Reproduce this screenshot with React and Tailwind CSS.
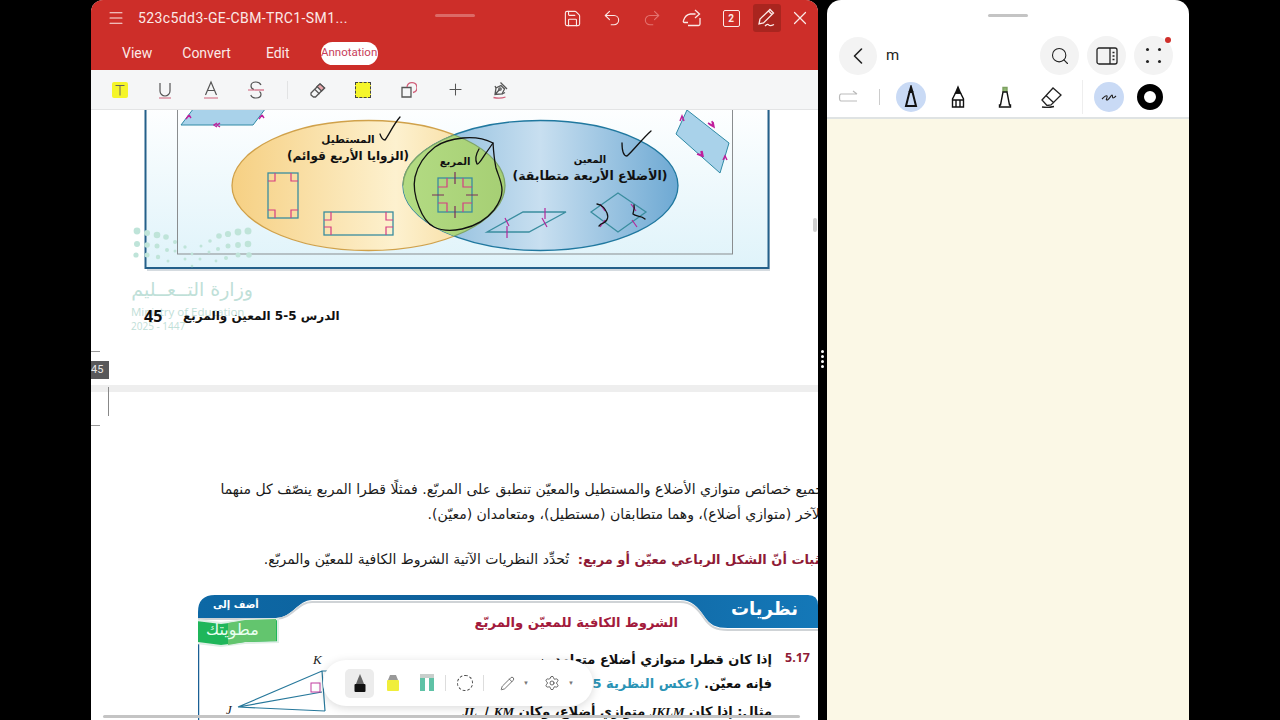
import React from "react";
import { Menu, Save, Undo2, Redo2, X, Plus, ChevronLeft, Search, Settings, Pencil } from "lucide-react";

const ar = "font-['DejaVu_Sans',sans-serif]";

function Underline() {
  return (
    <svg width="20" height="20" viewBox="0 0 20 20" fill="none" stroke="#555" strokeWidth="1.2">
      <path d="M5 3v8a5 5 0 0 0 10 0V3" />
      <path d="M4 18h12" stroke="#d0607a" />
    </svg>
  );
}

function LetterA() {
  return (
    <svg width="20" height="20" viewBox="0 0 20 20" fill="none" stroke="#555" strokeWidth="1.2">
      <path d="M4.5 15 10 2l5.500 13M6.500 10.500h7" />
      <path d="M3 18h14" stroke="#d0607a" />
    </svg>
  );
}

function Strike() {
  return (
    <svg width="20" height="20" viewBox="0 0 20 20" fill="none" stroke="#555" strokeWidth="1.2">
      <path d="M15 5c-1-2-3-3-5-3-3 0-5 1.500-5 4 0 2 1.500 3 3 3.500M13.500 11.500c1 .7 1.500 1.700 1.500 2.800 0 2.500-2.200 3.700-5 3.700-2.500 0-4.500-1-5.200-3" />
      <path d="M2 10h16" stroke="#d0607a" />
    </svg>
  );
}

function Tool({ children, className = "" }) {
  return <div className={`flex justify-center items-center ${className}`}>{children}</div>;
}

function RedHeader() {
  return (
    <div className="h-[70px] shrink-0 bg-[#cd2e29] text-[#fbe9e7] font-['Roboto',sans-serif]">
      <div className="h-9 relative flex items-center pl-[16px]">
        <Menu size={18} strokeWidth={1.4} />
        <span className="ml-[13px] text-[14px] tracking-[0.4px] leading-none">523c5dd3-GE-CBM-TRC1-SM1...</span>
        <div className="absolute left-[344px] top-[14px] w-10 h-[3px] rounded-full bg-[#dc6a66]"></div>
        <div className="ml-auto flex items-center">
          <Tool className="w-[40px]"><Save size={19} strokeWidth={1.4} /></Tool>
          <Tool className="w-[40px]"><Undo2 size={20} strokeWidth={1.3} /></Tool>
          <Tool className="w-[40px] text-[#e4736f]"><Redo2 size={20} strokeWidth={1.3} /></Tool>
          <Tool className="w-[39px]">
            <svg width="20" height="20" viewBox="0 0 20 20" fill="none" stroke="currentColor" strokeWidth="1.3">
              <path d="M6 17.500H2.500c-1 0-1.500-1-1-2 .8-2.500 3-6 7-6.500h5M13 5l4.500 4-4.500 4" transform="translate(0 -3)" />
              <path d="M18 10v6c0 1-.5 1.500-1.500 1.500H6" />
            </svg>
          </Tool>
          <Tool className="w-[40px]">
            <div className="w-[17px] h-[17px] border border-[#fbe9e7] rounded-[2px] text-[10px] font-bold flex items-center justify-center">2</div>
          </Tool>
          <Tool className="w-[28px] h-[28px] ml-[2px] bg-[#a9251f] rounded-[3px]">
            <svg width="22" height="22" viewBox="0 0 22 22" fill="none" stroke="currentColor" strokeWidth="1.3">
              <path d="M3 17 4 12 14 2.500l3.500 3.500L7.500 16z M12.500 4l3.500 3.500" />
              <path d="M9 19c2-2 3-2 4-.8s2 .8 5-.7" />
            </svg>
          </Tool>
          <Tool className="w-[36px] ml-[1px]"><X size={22} strokeWidth={1.3} /></Tool>
        </div>
      </div>
      <div className="h-[34px] flex items-center text-[14px]">
        <span className="ml-[31px]">View</span>
        <span className="ml-[30px]">Convert</span>
        <span className="ml-[35px]">Edit</span>
        <span className="ml-[31px] w-[57px] h-[23px] flex items-center justify-center bg-white rounded-full text-[#c8405a] text-[11.500px]">Annotation</span>
      </div>
    </div>
  );
}

function AnnotBar() {
  return (
    <div className="h-[40px] shrink-0 bg-[#f5f6f7] border-b border-[#e3e4e5] flex items-center pl-[6px] relative z-10">
      <Tool className="w-[45px]">
        <div className="w-4 h-4 bg-[#f5f52a] rounded-[2px] flex items-center justify-center">
          <svg width="12" height="12" viewBox="0 0 12 12" fill="none" stroke="#666" strokeWidth="1"><path d="M1.500 1.500h9M6 1.500v10" /></svg>
        </div>
      </Tool>
      <Tool className="w-[46px]"><Underline /></Tool>
      <Tool className="w-[45px]"><LetterA /></Tool>
      <Tool className="w-[46px]"><Strike /></Tool>
      <div className="w-px h-[18px] bg-[#e2e3e4] ml-[8px]"></div>
      <Tool className="w-[60px]">
        <svg width="18" height="18" viewBox="0 0 18 18" fill="none" stroke="#555" strokeWidth="1.300">
          <path d="M2 12 11 3l4.500 4-9 9H4.500L2 14z" />
          <path d="M6 8.500 10.500 13" />
          <path d="M11 3l4.500 4-3 3L8 5.500z" fill="#e9a8ae" stroke="#555" />
        </svg>
      </Tool>
      <Tool className="w-[30px]">
        <div className="w-4 h-4 bg-[#f5f52a] border border-dashed border-[#444]"></div>
      </Tool>
      <Tool className="w-[60px]">
        <svg width="18" height="18" viewBox="0 0 18 18" fill="none" strokeWidth="1.300">
          <path d="M3 6.500h9V16H3z" stroke="#555" />
          <path d="M8 6a5 5 0 1 1 6 5.500" stroke="#d0607a" />
        </svg>
      </Tool>
      <Tool className="w-[34px]"><Plus size={19} strokeWidth={1.300} color="#555" /></Tool>
      <Tool className="w-[56px]">
        <svg width="18" height="18" viewBox="0 0 18 18" fill="none" stroke="#555" strokeWidth="1.300">
          <path d="M4 13.500 5 7l5-2.500 3.500 3.500L11 13z M4 13.500l4.500-5" />
          <circle cx="9" cy="8" r="1.200" />
          <path d="m9.500 1.500 6.500 6.500M4 5l1 2M14 11.500l-3 1.500" />
          <path d="M2.500 16.500c4 1 8 1 12-.5" stroke="#d0607a" />
        </svg>
      </Tool>
    </div>
  );
}

const dots = [
  [137, 231, 3.400], [147, 233, 3], [157, 235, 3.300], [166, 237, 2.800], [175, 242, 2], [185, 247, 1.700], [201, 246, 1.500], [210, 241, 1.800], [219, 236, 2.800], [228, 234, 3.100], [238, 232, 3.400], [248, 231, 3.500],
  [137, 244, 3], [147, 245, 2.800], [157, 246, 2.500], [167, 250, 2], [175, 251, 1.500], [192, 254, 1.400], [209, 252, 1.500], [218, 249, 2], [228, 246, 2.500], [238, 245, 2.900], [248, 244, 3.300],
  [136, 255, 2.600], [147, 255, 2.500], [158, 257, 2.200], [168, 261, 1.500], [185, 259, 1.500], [200, 259, 1.500], [216, 261, 1.400], [226, 258, 2], [238, 255, 2.500], [249, 255, 2.800], [192, 266, 1.300],
];

function Venn() {
  return (
    <svg width="727" height="165" viewBox="91 110 727 165" className="block" style={{ fontFamily: "DejaVu Sans, sans-serif" }}>
      <defs>
        <linearGradient id="page" x1="0" y1="0" x2="0" y2="1">
          <stop offset="0" stopColor="#ffffff" />
          <stop offset="1" stopColor="#dff3fa" />
        </linearGradient>
        <linearGradient id="yel" x1="0" y1="0" x2="1" y2="0">
          <stop offset="0" stopColor="#f6d083" />
          <stop offset="0.6" stopColor="#fdf1cf" />
          <stop offset="1" stopColor="#f5d48c" />
        </linearGradient>
        <linearGradient id="blu" x1="0" y1="0" x2="1" y2="0">
          <stop offset="0" stopColor="#7fb4d8" />
          <stop offset="0.5" stopColor="#c8dff0" />
          <stop offset="1" stopColor="#6ea9d3" />
        </linearGradient>
        <linearGradient id="grn" x1="0" y1="0" x2="1" y2="0">
          <stop offset="0" stopColor="#9ec57a" />
          <stop offset="0.6" stopColor="#b4dc84" />
          <stop offset="1" stopColor="#a6cf74" />
        </linearGradient>
        <clipPath id="inBlue"><ellipse cx="540.500" cy="185.500" rx="137.500" ry="65" /></clipPath>
      </defs>
      <rect x="147" y="100" width="623" height="171" fill="#b9c3cc" opacity="0.6" />
      <rect x="145.500" y="100" width="623" height="168" fill="url(#page)" stroke="#24608a" strokeWidth="2" />
      <rect x="177.500" y="100" width="555" height="154" fill="none" stroke="#8a8d8f" strokeWidth="1" />

      <polygon points="181,125 253,125 272,100 200,100" fill="#a9d2ea" stroke="#2f8aa5" />
      <path d="M217 123l-3 2 3 2m3-4-3 2 3 2M189 115l-3 4m3-4 2 3M262 115l-3 4m3-4 2 3" fill="none" stroke="#c01e9c" strokeWidth="1.400" />
      <polygon points="687,110 729,143 720,173 676,134" fill="#a9d2ea" stroke="#2f8aa5" />
      <path d="m708 123 5 3-1-5m-3 3 5 3-1-5M697 154l5 2-1-5m-3 3 5 2-1-5M680 121l2-5 2 5M723 160l2-4 2 4" fill="none" stroke="#c01e9c" strokeWidth="1.500" />

      <ellipse cx="368.500" cy="185.500" rx="136.500" ry="65" fill="url(#yel)" stroke="#d0a14a" strokeWidth="1.300" />
      <ellipse cx="540.500" cy="185.500" rx="137.500" ry="65" fill="url(#blu)" stroke="#20789f" strokeWidth="1.300" />
      <ellipse cx="368.500" cy="185.500" rx="136.500" ry="65" fill="url(#grn)" stroke="#7ea468" strokeWidth="1.300" clipPath="url(#inBlue)" />
      <path d="M403 185.500a137.500 65 0 0 1 51-50.500" fill="none" stroke="#7ea468" strokeWidth="1.300" />

      <g fill="none" stroke="#3a8d9f" strokeWidth="1.300">
        <rect x="268" y="173" width="30" height="45" />
        <rect x="324" y="212" width="69" height="23" />
        <rect x="438" y="178" width="34" height="34" />
        <polygon points="487,232 529,232 566,212 523,212" />
        <polygon points="591,212 618,193 646,212 618,232" />
      </g>
      <path d="M268 181h7v-8M291 173v8h7M268 210h7v8M291 218v-8h7M324 220h7v-8M386 212v8h7M324 227h7v8M386 235v-8h7M438 187h9v-9M463 178v9h9M438 203h9v9M463 212v-9h9" fill="none" stroke="#d63c82" strokeWidth="1.200" />
      <path d="M455 172v12M455 206v12M432 195h12M466 195h12" stroke="#7a2f5a" strokeWidth="1.200" />
      <path d="M505 218l4 8M507 226v12M545 208v11M542 218l5 9M600 204l5 7M631 204l5 7M632 220l5 7M600 227l5-7" stroke="#b5279b" strokeWidth="1.200" fill="none" />

      <g fill="#111" fontWeight="700" textAnchor="middle" direction="rtl">
        <text x="348" y="143" fontSize="10.500">المستطيل</text>
        <text x="348" y="160" fontSize="12">(الزوايا الأربع قوائم)</text>
        <text x="455" y="165" fontSize="10">المربع</text>
        <text x="590" y="163" fontSize="10">المعين</text>
        <text x="590" y="180" fontSize="12.500">(الأضلاع الأربعة متطابقة)</text>
      </g>

      <g fill="none" stroke="#111" strokeWidth="1.300" strokeLinecap="round" strokeLinejoin="round">
        <path d="M380 134c1 3 2 6 5 6 4-5 8-15 15-23" />
        <path d="M622 143c0 8 2 13 5 13 6-5 15-17 24-25" />
        <path d="M479 149c-3 5-4 11-2 15 2 1 6-7 9-11l7-10" />
        <path d="M493 143c-8-4-20-6-30-5-10 1-20 3-28 9-9 7-17 17-20 30-2 10 0 20 4 30 3 8 7 16 15 20 8 4 18 4 28 2 14-3 24-9 32-19 6-8 8-14 8-20 0-8-4-15-6-22-1-5-2-9-3-25z" />
        <path d="M597 204c6 1 8 5 10 9 2 5 0 9-6 11l-2 2M634 205c1 4-1 7-1 9 3 3 8 1 12 5" />
      </g>

      <g fill="#bfe4d9">
        {dots.map(([x, y, r], i) => <circle key={i} cx={x} cy={y} r={r} />)}
      </g>
    </svg>
  );
}

function FooterOne() {
  return (
    <div className="relative h-[110px]">
      <div className="absolute left-[40px] top-[5px] w-[122px] leading-none text-[#bfe0d8]">
        <div dir="rtl" className={`${ar} text-[19px] h-[24px] whitespace-nowrap`}>وزارة التــعــليم</div>
        <div className="font-['Open_Sans',sans-serif] text-[11.500px] mt-[2px] whitespace-nowrap">Ministry of Education</div>
        <div className="font-['Open_Sans',sans-serif] text-[10px] mt-[3px]">2025 - 1447</div>
      </div>
      <div className="flex items-center pt-[30px] pl-[53px] relative">
        <span className="font-['Open_Sans',sans-serif] font-bold text-[16px] leading-[22px] w-[39px] text-[#111]">45</span>
        <span dir="rtl" className={`${ar} font-bold text-[12px] leading-[22px] text-[#111] whitespace-nowrap`}>الدرس 5-5 المعين والمربع</span>
      </div>
      <div className="absolute left-0 top-[76px] w-[9px] h-px bg-[#999]"></div>
      <div className="absolute left-0 top-[86px] w-[18px] h-[18px] bg-[#58585a] text-[#e8e8e8] text-[11px] font-['Roboto',sans-serif] leading-[18px] overflow-hidden text-right pr-[7px]">45</div>
    </div>
  );
}

function TheoremBox() {
  return (
    <div className="relative ml-[107px] h-[125px] text-[#111]">
      <svg width="620" height="125" viewBox="198 595 620 125" className="absolute left-0 top-0">
        <defs>
          <linearGradient id="band" x1="0" y1="0" x2="1" y2="0">
            <stop offset="0" stopColor="#0d68a5" />
            <stop offset="0.5" stopColor="#0f5f99" />
            <stop offset="1" stopColor="#1478b8" />
          </linearGradient>
        </defs>
        <path d="M198 720V612q0-17 17-17h593q10 0 10 10v23H728c-12 0-18-3-24-12-6-9-12-16-24-16H312c-14 0-20 18-36 18H198z" fill="url(#band)" />
        <path d="M198 619h78c16 0 22-17 36-17h368c12 0 18 7 24 16 6 9 12 12 24 12h90" fill="none" stroke="#cfd3d6" strokeWidth="2" />
        <path d="M198.500 619v101" stroke="#1a5f95" strokeWidth="1.500" />
        <g fill="none" stroke="#27789b" strokeWidth="1.200">
          <path d="M238 707 322 671l9 0M238 707l84-15M238 707l87 4M322 671l3 40" />
        </g>
        <rect x="311" y="683" width="9" height="9" fill="none" stroke="#c23da0" />
        <path d="M197 620l24 3 24-3 33-1v23l-33 1-24 3-24-3z" fill="#1fb65a" stroke="#dfeee6" strokeWidth="2" />
        <path d="M228 623l17-3 31-1v22l-31 1-17 3z" fill="#63c56e" />
      </svg>
      <div dir="rtl" className={`relative ${ar} leading-none`}>
        <div className="absolute right-[20px] top-[5px] text-white font-bold text-[18px] tracking-[0.5px]">نظريات</div>
        <div className="absolute left-[15px] top-[5px] text-white font-bold text-[10px]">أضف إلى</div>
        <div className="absolute left-[8px] top-[27px] text-[#e8fff0] text-[16px]">مطويتك</div>
        <div className="absolute right-[140px] top-[21px] text-[#a31a3c] font-bold text-[13.200px] whitespace-nowrap">الشروط الكافية للمعيّن والمربّع</div>
        <div className="absolute right-[46px] top-[58px] font-bold text-[13px] whitespace-nowrap">إذا كان قطرا متوازي أضلاع متعامدين</div>
        <div dir="ltr" className="absolute right-[8px] top-[57px] text-[#8f1a36] font-bold text-[12.500px] font-['Open_Sans',sans-serif]">5.17</div>
        <div className="absolute right-[46px] top-[82px] font-bold text-[13px] whitespace-nowrap">فإنه معيّن. <span className="text-[#2a93b5]">(عكس النظرية 5.15)</span></div>
        <div className="absolute right-[46px] top-[110px] font-bold text-[13px] whitespace-nowrap">مثال: إذا كان <i dir="ltr" className="font-['Liberation_Serif',serif]">JKLM</i> متوازي أضلاع، وكان <i dir="ltr" className="font-['Liberation_Serif',serif]">JL ⊥ KM</i></div>
        <i className="absolute left-[115px] top-[58px] font-['Liberation_Serif',serif] text-[13px] text-[#222]">K</i>
        <i className="absolute left-[28px] top-[108px] font-['Liberation_Serif',serif] text-[13px] text-[#222]">J</i>
      </div>
    </div>
  );
}

function PageTwo() {
  return (
    <div className="relative">
      <div className="absolute left-[17px] top-[-5px] h-[29px] w-px bg-[#888]"></div>
      <div className="absolute left-0 top-[33px] w-[9px] h-px bg-[#999]"></div>
      <div dir="rtl" className={`pt-[85px] -mr-[6px] ${ar} text-[14px] leading-[25px] text-[#1a1a1a] whitespace-nowrap`}>
        <div>جميع خصائص متوازي الأضلاع والمستطيل والمعيّن تنطبق على المربّع. فمثلًا قطرا المربع ينصّف كل منهما</div>
        <div>الآخر (متوازي أضلاع)، وهما متطابقان (مستطيل)، ومتعامدان (معيّن).</div>
        <div className="mt-[20px]">
          <span className="font-bold text-[#8f1a36] text-[13px]">إثبات أنّ الشكل الرباعي معيّن أو مربع: </span>
          <span className="mr-1">تُحدِّد النظريات الآتية الشروط الكافية للمعيّن والمربّع.</span>
        </div>
      </div>
      <div className="h-[23px]"></div>
      <TheoremBox />
    </div>
  );
}

function FloatingBar() {
  return (
    <div className="absolute left-[232px] top-[550px] w-[270px] h-[46px] bg-white rounded-[23px] shadow-[0_2px_10px_rgba(0,0,0,0.15)] flex items-center pl-[22px] z-20">
      <Tool className="w-[29px] h-[29px] bg-[#ececec] rounded-[5px]">
        <svg width="14" height="20" viewBox="0 0 14 20"><path d="M4.500 7 7 1l2.500 6L11 11H3z" fill="#666" /><rect x="1.500" y="11" width="11" height="8" rx="1" fill="#111" /></svg>
      </Tool>
      <Tool className="w-[38px]">
        <svg width="14" height="20" viewBox="0 0 14 20"><path d="M4 2h6l2 5H2z" fill="#999" /><rect x="1" y="7" width="12" height="11" rx="1" fill="#f0ee3a" /></svg>
      </Tool>
      <Tool className="w-[29px]">
        <svg width="14" height="18" viewBox="0 0 14 18"><rect width="14" height="4" fill="#c8cfcc" /><rect y="4" width="5" height="13" fill="#5fc2a6" /><rect x="9" y="4" width="5" height="13" fill="#5fc2a6" /></svg>
      </Tool>
      <div className="w-px h-[16px] bg-[#ddd] ml-[4px]"></div>
      <Tool className="w-[37px]"><div className="w-4 h-4 rounded-full border border-dashed border-[#444]"></div></Tool>
      <div className="w-px h-[16px] bg-[#ddd]"></div>
      <Tool className="w-[47px] ml-[7px]">
        <Pencil size={15} strokeWidth={1.200} color="#444" />
        <span className="ml-[8px] text-[6px] text-[#777]">▼</span>
      </Tool>
      <Tool className="w-[44px] -ml-[1px]">
        <Settings size={16} strokeWidth={1.200} color="#444" />
        <span className="ml-[8px] text-[6px] text-[#777]">▼</span>
      </Tool>
    </div>
  );
}

function RightPanel() {
  return (
    <div className="w-[362px] ml-[9px] h-[720px] bg-white rounded-t-[14px] overflow-hidden flex flex-col">
      <div className="h-[32px] flex justify-center pt-[14px] shrink-0">
        <div className="w-10 h-[3px] rounded-full bg-[#c4c4c4]"></div>
      </div>
      <div className="h-[47px] flex items-center pl-[12px] pr-[16px] relative shrink-0">
        <div className="w-[38px] h-[38px] rounded-full bg-[#f3f3f3] flex items-center justify-center">
          <ChevronLeft size={28} strokeWidth={1.400} color="#222" />
        </div>
        <span className="ml-[9px] text-[15px] text-[#222] font-['Roboto',sans-serif]">m</span>
        <div className="ml-auto flex gap-[8px]">
          <div className="w-[39px] h-[39px] rounded-full bg-[#f3f3f3] flex items-center justify-center">
            <Search size={20} strokeWidth={1.300} color="#222" />
          </div>
          <div className="w-[39px] h-[39px] rounded-full bg-[#f3f3f3] flex items-center justify-center">
            <svg width="22" height="18" viewBox="0 0 22 18" fill="none" stroke="#222" strokeWidth="1.300">
              <rect x="1" y="1" width="20" height="16" rx="2" />
              <path d="M14 1v16M16.500 5.500h2M16.500 9h2M16.500 12.500h2" />
            </svg>
          </div>
          <div className="w-[39px] h-[39px] rounded-full bg-[#f3f3f3] relative grid grid-cols-2 gap-[8px] place-items-center p-[12px]">
            <div className="w-[3px] h-[3px] rounded-full bg-[#222]"></div>
            <div className="w-[3px] h-[3px] rounded-full bg-[#222]"></div>
            <div className="w-[3px] h-[3px] rounded-full bg-[#222]"></div>
            <div className="w-[3px] h-[3px] rounded-full bg-[#222]"></div>
            <div className="absolute right-[2px] top-[1px] w-[6px] h-[6px] rounded-full bg-[#cf2f2a]"></div>
          </div>
        </div>
      </div>
      <div className="h-[38px] pb-[2px] flex items-center pl-[11px] shrink-0">
        <svg width="20" height="14" viewBox="0 0 20 14" fill="none" stroke="#bbb" strokeWidth="1.200">
          <path d="M19 4H3C1 4 1 11 3 11h16M15 1l4 3" />
        </svg>
        <div className="w-px h-[16px] bg-[#ccc] ml-[21px]"></div>
        <Tool className="w-[30px] h-[30px] rounded-full bg-[#c9daf5] ml-[16px]">
          <svg width="14" height="24" viewBox="0 0 14 24" fill="none" stroke="#111" strokeWidth="2">
            <path d="M5.500 7 7 2l1.500 5" fill="#111" />
            <path d="M5.500 7 2 21h10L8.500 7z" />
          </svg>
        </Tool>
        <Tool className="w-[30px] h-[30px] ml-[17px]">
          <svg width="14" height="24" viewBox="0 0 14 24" fill="none" stroke="#111" strokeWidth="1.400">
            <path d="M4.500 8 7 2l2.500 6z" fill="#111" />
            <path d="M4.500 8 1.500 14v8h11v-8L9.500 8zM1.500 15h11M5 15v7M9 15v7" />
          </svg>
        </Tool>
        <Tool className="w-[30px] h-[30px] ml-[17px]">
          <svg width="14" height="24" viewBox="0 0 14 24" fill="none" stroke="#111" strokeWidth="1.400">
            <path d="M5 7V2.500h4V7" fill="#8fb873" stroke="#7da060" />
            <path d="M5 7 2.500 20H1.500v2h11v-2h-1L9 7z" />
          </svg>
        </Tool>
        <Tool className="w-[30px] h-[30px] ml-[16px]">
          <svg width="24" height="24" viewBox="0 0 24 24" fill="none" stroke="#222" strokeWidth="1.300">
            <path d="M3 15 14 3l8 7-10 10-4 .5z M7 10.500l8 7.500" />
            <path d="M3 22c4 .5 8 .5 12-.5" />
          </svg>
        </Tool>
        <div className="w-px h-[34px] bg-[#eeeeee] ml-[16px]"></div>
        <Tool className="w-[30px] h-[30px] rounded-full bg-[#c9daf5] ml-[11px]">
          <svg width="16" height="10" viewBox="0 0 16 10" fill="none" stroke="#222" strokeWidth="1.100">
            <path d="M1 7c2-2 4-4 5-3s-2 4 0 4 4-5 5-5 0 3 1 3 2-1 3-2" />
          </svg>
        </Tool>
        <div className="w-[26px] h-[26px] rounded-full border-[7px] border-black ml-[13px]"></div>
      </div>
      <div className="flex-1 border-t-2 border-[#dfe3e3] bg-[#fbf8e6]"></div>
    </div>
  );
}

export default function App() {
  return (
    <div className="w-[1280px] h-[720px] bg-black overflow-hidden flex pl-[91px]">
      <div className="w-[727px] h-[720px] bg-white rounded-t-[12px] overflow-hidden flex flex-col relative">
        <RedHeader />
        <AnnotBar />
        <div className="flex-1 overflow-hidden relative">
          <Venn />
          <FooterOne />
          <div className="h-[7px] bg-[#eeeeee]"></div>
          <PageTwo />
          <FloatingBar />
          <div className="absolute right-[1px] top-[108px] w-[4px] h-[14px] rounded-full bg-[#cfcfcf]"></div>
          <div className="absolute left-[12px] right-[18px] bottom-[2px] h-[3px] rounded-full bg-[#c4c4c4]"></div>
        </div>
      </div>
      <div className="relative">
        <div className="absolute left-[3px] top-[350px] flex flex-col gap-[2px]">
          <div className="w-[3px] h-[3px] rounded-full bg-white"></div>
          <div className="w-[3px] h-[3px] rounded-full bg-white"></div>
          <div className="w-[3px] h-[3px] rounded-full bg-white"></div>
          <div className="w-[3px] h-[3px] rounded-full bg-white"></div>
        </div>
      </div>
      <RightPanel />
    </div>
  );
}
